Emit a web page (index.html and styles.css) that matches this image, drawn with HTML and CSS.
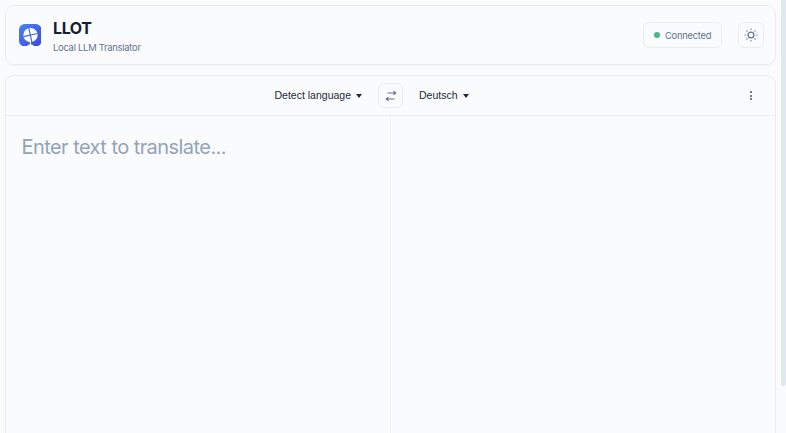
FILE: index.html
```html
<!DOCTYPE html>
<html lang="en">
<head>
<meta charset="utf-8">
<title>LLOT</title>
<link rel="stylesheet" href="styles.css">
</head>
<body>
<div class="app">
  <header class="header">
    <svg class="logo" viewBox="0 0 22 22">
      <defs><linearGradient id="g" x1="0" y1="0" x2="1" y2="1"><stop offset="0" stop-color="#4b83ee"/><stop offset="1" stop-color="#3d48dc"/></linearGradient></defs>
      <rect width="22" height="22" rx="5.5" fill="url(#g)"/>
      <circle cx="11.2" cy="10.8" r="7" fill="#fff"/>
      <path d="M9.6 4 12.6 17.7M4.4 12.4 18 9.3" stroke="#4169e2" stroke-width="1.2"/>
      <path d="M11.2 17v3.5M8.6 21.3q2.6-2.2 5.2 0z" stroke="#fff" stroke-width="1" fill="#fff"/>
    </svg>
    <div class="brand">
      <h1 class="title">LLOT</h1>
      <p class="subtitle">Local LLM Translator</p>
    </div>
    <div class="status"><span class="dot"></span><span>Connected</span></div>
    <button class="icon-button theme" aria-label="Theme">
      <svg width="14" height="14" viewBox="0 0 14 14" fill="none" stroke="#64748b" stroke-width="1.2" stroke-linecap="round">
        <circle cx="7" cy="7" r="2.9"/>
        <path d="M7 1v.3M7 12.7v.3M1 7h.3M12.7 7h.3M2.8 2.8l.2.2M11 11l.2.2M2.8 11.2l.2-.2M11 3l.2-.2"/>
      </svg>
    </button>
  </header>
  <main class="translator">
    <div class="toolbar">
      <button class="language source"><span>Detect language</span><span class="caret"></span></button>
      <button class="icon-button swap" aria-label="Swap languages">
        <svg width="12" height="12" viewBox="0 0 12 12" fill="none" stroke="#64748b" stroke-width="1.2">
          <path d="M2.5 3H10M2 9h7.5"/>
          <path d="M8.6.5 11.6 3 8.6 5.5zM3.4 6.5.4 9l3 2.5z" fill="#64748b" stroke="none"/>
        </svg>
      </button>
      <div class="target">
        <button class="language"><span class="target-name">Deutsch</span><span class="caret"></span></button>
        <button class="more" aria-label="More"><i></i><i></i><i></i></button>
      </div>
    </div>
    <div class="panes">
      <div class="pane input">Enter text to translate...</div>
      <div class="pane"></div>
    </div>
  </main>
</div>
<div class="scroll-track"><div class="scroll-thumb"></div></div>
</body>
</html>
```
FILE: styles.css
```css
* { box-sizing: border-box; }
body {
  margin: 0;
  height: 433px;
  overflow: hidden;
  display: flex;
  background: #f9fbfd;
  color: #1e293b;
  font-family: Inter, "Liberation Sans", sans-serif;
}
button { padding: 0; border: 0; background: none; color: inherit; font: inherit; }
.app { flex: 1; padding: 5px 0 0 5px; min-width: 0; }
.header {
  height: 60px;
  display: flex;
  align-items: center;
  padding: 0 11px 0 12.5px;
  border: 1px solid #e9edf3;
  border-radius: 9px;
  box-shadow: 0 1px 2px #0f172a08;
}
.logo { width: 22.5px; height: 22.5px; display: block; }
.brand { margin: 1px 0 0 12px; flex: 1; }
.title { margin: 0; font-size: 16px; line-height: 20px; font-weight: 700; letter-spacing: -0.4px; color: #172033; }
.subtitle { margin: 3px 0 0; font-size: 9.4px; line-height: 13px; letter-spacing: -0.25px; color: #64748b; }
.status {
  width: 79px;
  height: 26px;
  display: flex;
  align-items: center;
  padding-left: 10px;
  gap: 5px;
  border: 1px solid #e9edf3;
  border-radius: 6px;
  font-size: 9.4px;
  letter-spacing: -0.25px;
  color: #64748b;
  white-space: nowrap;
}
.dot { width: 6px; height: 6px; border-radius: 50%; background: #42b883; }
.icon-button {
  display: flex;
  align-items: center;
  justify-content: center;
  border: 1px solid #e9edf3;
  border-radius: 6px;
}
.theme { width: 26px; height: 26px; margin-left: 16px; }
.translator {
  height: 370px;
  margin-top: 10px;
  border: 1px solid #e9edf3;
  border-radius: 9px 9px 0 0;
}
.toolbar {
  height: 40px;
  display: grid;
  grid-template-columns: 1fr 25px 1fr;
  align-items: center;
  border-bottom: 1px solid #e9edf3;
}
.language {
  display: flex;
  align-items: center;
  gap: 5px;
  font-family: "Liberation Sans", sans-serif;
  font-size: 10.5px;
  line-height: 14px;
  margin-bottom: 1px;
}
.source { justify-self: end; margin-right: 16px; }
.caret { margin-top: 1px; border: 3px solid transparent; border-top: 4px solid #1e293b; border-bottom: 0; }
.swap { width: 25px; height: 25px; }
.target { display: flex; align-items: center; justify-content: space-between; padding: 0 22px 0 16px; }
.more { display: flex; flex-direction: column; gap: 1.5px; width: 4px; align-items: center; }
.more i { width: 2px; height: 2px; border-radius: 50%; background: #475569; }
.panes { height: 330px; display: grid; grid-template-columns: 384px 1fr; }
.pane + .pane { border-left: 1px solid #f0f3f7; }
.input { padding: 18px 15.5px; font-size: 20px; line-height: 26px; letter-spacing: -0.56px; color: #94a3b8; white-space: nowrap; }
.scroll-track { width: 5px; margin-left: 5px; flex: none; }
.scroll-thumb { height: 386px; background: #e2e8f0; border-radius: 0 0 2px 2px; }
```
